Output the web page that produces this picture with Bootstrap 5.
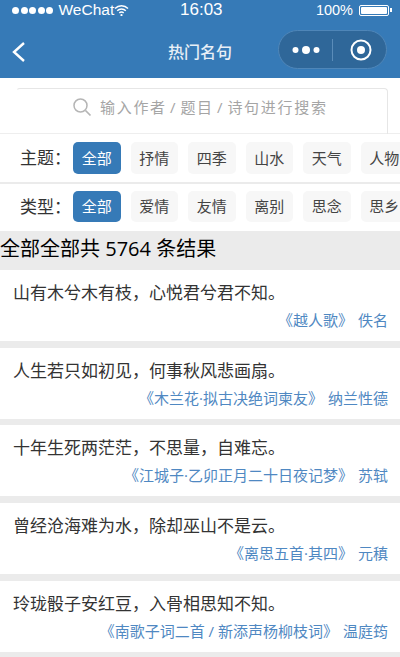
<!DOCTYPE html>
<html lang="zh-CN">
<head>
    <meta charset="UTF-8">
    <meta name="viewport" content="width=device-width, initial-scale=1.0">
    <link rel="stylesheet" href="https://cdn.jsdelivr.net/npm/bootstrap@5.3.0/dist/css/bootstrap.min.css">
    <title>热门名句</title>
    <style>
        html, body { height: 657px; overflow: hidden; }
        body { background: #ebebeb; font-family: "Open Sans", "Noto Sans CJK SC", sans-serif; color: #333; }
        .top-bar { background: #367ab7; color: #fff; height: 78px; }
        .status-row { height: 20px; padding: 0 8px 0 12px; font: 15.5px/20px "Liberation Sans", sans-serif; }
        .status-dot { width: 7px; height: 7px; border-radius: 50%; background: #fff; margin-right: 1.5px; }
        .status-time { font-size: 17px; left: 180px; top: 0; }
        .status-pct { font-size: 14.5px; }
        .batt-box { width: 30px; height: 11px; border: 1px solid #fff; border-radius: 2px; padding: 1px; margin-left: 6px; }
        .batt-fill { background: #fff; height: 100%; border-radius: 1px; }
        .batt-tip { width: 2px; height: 4px; background: #fff; margin-left: 1px; }
        .nav-row { height: 58px; }
        .nav-title { left: 0; right: 0; top: 0; line-height: 64px; font-size: 16px; font-weight: 500; color: #e8eff6; }
        .back-icon { margin-left: 11px; margin-top: 6px; }
        .capsule { width: 109px; height: 39px; margin: 10px 13px 0 0; border: 1px solid #4f86b8; border-radius: 20px; background: #2f6799; }
        .capsule-dots { margin-left: 13px; }
        .capsule-sep { width: 1px; height: 22px; background: #5a8cb9; margin-left: 12px; }
        .capsule-ring { margin-left: 17px; }
        .search-wrap { background: #fff; height: 56px; padding: 10px 12px 0 16px; border-bottom: 1px solid #eee; }
        .search-box { height: 46px; border: 1px solid #e6e6e6; border-bottom: 0; border-left-color: transparent; border-radius: 4px 4px 0 0; padding: 0 0 9px 55px; color: #a5a5a5; font-size: 15px; letter-spacing: 1.7px; }
        .filter-row { background: #fff; white-space: nowrap; overflow: hidden; }
        .filter-one { height: 48px; margin-bottom: 2px; padding-top: 8px; }
        .filter-two { height: 47px; padding-top: 7px; }
        .filter-name { width: 73px; padding-left: 20px; font-size: 17px; color: #333; line-height: 32px; flex: none; }
        .filter-tag { width: 47.5px; height: 32px; line-height: 32px; border-radius: 5px; background: #f7f7f7; color: #444; font-size: 15px; text-align: center; margin-right: 10px; flex: none; }
        .filter-two .filter-tag { height: 31px; line-height: 31px; }
        .filter-tag.active { background: #367ab7; color: #fff; }
        .result-bar { height: 39px; line-height: 36px; background: #ebebeb; color: #000; font-size: 20px; }
        .poem-item { background: #fff; height: 71px; margin-bottom: 6.7px; padding: 10px 12px 0 13px; }
        .poem-line { font-size: 17px; line-height: 26px; color: #333; }
        .poem-src { font-size: 15px; line-height: 20px; margin-top: 4px; color: #4f88c2; }
        .poem-author { margin-left: 5px; }
    </style>
</head>
<body>

    <div class="top-bar">
        <div class="status-row d-flex align-items-center position-relative">
            <span class="status-dot"></span><span class="status-dot"></span><span class="status-dot"></span><span class="status-dot"></span><span class="status-dot"></span>
            <span class="ms-1">WeChat</span>
            <svg width="15" height="12" viewBox="0 0 15 12"><path d="M1 4.5a9 9 0 0 1 13 0M3.2 6.8a6 6 0 0 1 8.6 0M5.3 9a3 3 0 0 1 4.4 0" fill="none" stroke="#fff" stroke-width="1.4"/><circle cx="7.5" cy="11" r="1.1" fill="#fff"/></svg>
            <span class="status-time position-absolute">16:03</span>
            <span class="status-pct ms-auto">100%</span>
            <span class="batt-box"><span class="batt-fill d-block"></span></span>
            <span class="batt-tip"></span>
        </div>
        <div class="nav-row d-flex justify-content-between align-items-center position-relative">
            <div class="nav-title position-absolute text-center">热门名句</div>
            <svg class="back-icon" width="15" height="22" viewBox="0 0 15 22"><path d="M13 2 3 11l10 9" fill="none" stroke="#fff" stroke-width="2.4"/></svg>
            <div class="capsule d-flex align-items-center align-self-start">
                <svg class="capsule-dots" width="28" height="10" viewBox="0 0 28 10"><circle cx="3.5" cy="5" r="3" fill="#fff"/><circle cx="14" cy="5" r="4" fill="#fff"/><circle cx="24.5" cy="5" r="3" fill="#fff"/></svg>
                <span class="capsule-sep"></span>
                <svg class="capsule-ring" width="22" height="22" viewBox="0 0 22 22"><circle cx="11" cy="11" r="9.5" fill="none" stroke="#fff" stroke-width="2"/><circle cx="11" cy="11" r="4" fill="#fff"/></svg>
            </div>
        </div>
    </div>

    <div class="search-wrap">
        <div class="search-box d-flex align-items-center">
            <svg class="me-2" width="20" height="20" viewBox="0 0 20 20"><circle cx="8.5" cy="8.5" r="6.5" fill="none" stroke="#b5b5b5" stroke-width="1.5"/><path d="m13.5 13.5 5 5" stroke="#b5b5b5" stroke-width="1.7"/></svg>
            <span>输入作者&#x200A;/&#x200A;题目&#x200A;/&#x200A;诗句进行搜索</span>
        </div>
    </div>

    <div class="filter-row filter-one d-flex">
        <div class="filter-name">主题&#xFF1A;</div>
        <div class="filter-tag active">全部</div>
        <div class="filter-tag">抒情</div>
        <div class="filter-tag">四季</div>
        <div class="filter-tag">山水</div>
        <div class="filter-tag">天气</div>
        <div class="filter-tag">人物</div>
    </div>
    <div class="filter-row filter-two d-flex">
        <div class="filter-name">类型&#xFF1A;</div>
        <div class="filter-tag active">全部</div>
        <div class="filter-tag">爱情</div>
        <div class="filter-tag">友情</div>
        <div class="filter-tag">离别</div>
        <div class="filter-tag">思念</div>
        <div class="filter-tag">思乡</div>
    </div>

    <div class="result-bar">全部全部共 5764 条结果</div>

    <div class="poem-item">
        <div class="poem-line">山有木兮木有枝&#xFF0C;心悦君兮君不知。</div>
        <div class="poem-src text-end">《越人歌》<span class="poem-author">佚名</span></div>
    </div>
    <div class="poem-item">
        <div class="poem-line">人生若只如初见&#xFF0C;何事秋风悲画扇。</div>
        <div class="poem-src text-end">《木兰花·拟古决绝词柬友》<span class="poem-author">纳兰性德</span></div>
    </div>
    <div class="poem-item">
        <div class="poem-line">十年生死两茫茫&#xFF0C;不思量&#xFF0C;自难忘。</div>
        <div class="poem-src text-end">《江城子·乙卯正月二十日夜记梦》<span class="poem-author">苏轼</span></div>
    </div>
    <div class="poem-item">
        <div class="poem-line">曾经沧海难为水&#xFF0C;除却巫山不是云。</div>
        <div class="poem-src text-end">《离思五首·其四》<span class="poem-author">元稹</span></div>
    </div>
    <div class="poem-item">
        <div class="poem-line">玲珑骰子安红豆&#xFF0C;入骨相思知不知。</div>
        <div class="poem-src text-end">《南歌子词二首 / 新添声杨柳枝词》<span class="poem-author">温庭筠</span></div>
    </div>

</body>
</html>
